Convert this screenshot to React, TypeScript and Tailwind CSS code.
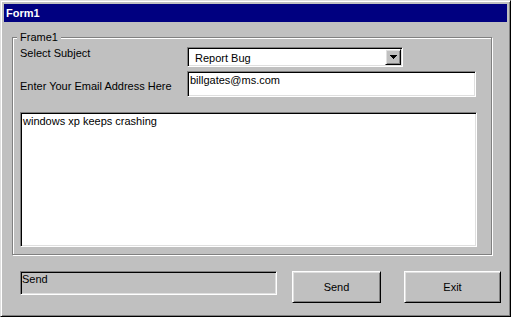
const sunken =
  "border border-t-[#808080] border-l-[#808080] border-b-white border-r-white shadow-[inset_1px_1px_0_#000,inset_-1px_-1px_0_#dfdfdf]";
const raised =
  "border border-t-white border-l-white border-b-black border-r-black shadow-[inset_1px_1px_0_#dfdfdf,inset_-1px_-1px_0_#808080]";

function DownArrow() {
  return (
    <svg width="7" height="4" viewBox="0 0 7 4" shapeRendering="crispEdges">
      <rect x="0" y="0" width="7" height="1" fill="#000" />
      <rect x="1" y="1" width="5" height="1" fill="#000" />
      <rect x="2" y="2" width="3" height="1" fill="#000" />
      <rect x="3" y="3" width="1" height="1" fill="#000" />
    </svg>
  );
}

function Button({ label, width }: { label: string; width: string }) {
  return (
    <button
      className={`${raised} ${width} h-[32px] bg-[#c0c0c0] flex items-center justify-center text-black`}
    >
      {label}
    </button>
  );
}

export default function App() {
  return (
    <div
      className={`w-[511px] h-[317px] bg-[#c0c0c0] flex flex-col p-[3px] border border-t-[#dfdfdf] border-l-[#dfdfdf] border-b-black border-r-black shadow-[inset_1px_1px_0_#fff,inset_-1px_-1px_0_#808080] font-['Liberation_Sans',Arial,sans-serif] text-[11px] leading-[13px] text-black overflow-hidden`}
    >
      {/* title bar */}
      <div className="h-[18px] shrink-0 bg-[#000080] text-white font-bold leading-[18px] pl-[2px]">
        Form1
      </div>

      {/* Frame1 */}
      <div className="relative ml-[8px] mt-[15px] w-[480px] h-[218px] shrink-0 border border-[#808080] shadow-[inset_1px_1px_0_#fff,1px_1px_0_#fff]">
        <span className="absolute left-[4px] top-[-7px] bg-[#c0c0c0] px-[3px]">Frame1</span>

        <div className="flex mt-[9px] pl-[7px]">
          <div className="w-[167px]">Select Subject</div>
          <div className={`${sunken} w-[216px] h-[20px] bg-white flex`}>
            <div className="flex-1 pl-[7px] pt-[4px]">Report Bug</div>
            <div className={`${raised} w-[16px] h-[16px] m-[1px] bg-[#c0c0c0] flex items-center justify-center`}>
              <DownArrow />
            </div>
          </div>
        </div>

        <div className="flex mt-[4px] pl-[7px]">
          <div className="w-[167px] mt-[9px]">Enter Your Email Address Here</div>
          <div className={`${sunken} w-[289px] h-[26px] bg-white pl-[2px] pt-[2px]`}>
            billgates@ms.com
          </div>
        </div>

        <div className={`${sunken} ml-[7px] mt-[15px] w-[457px] h-[135px] bg-white pl-[2px] pt-[2px]`}>
          windows xp keeps crashing
        </div>
      </div>

      {/* bottom row */}
      <div className="flex items-start mt-[16px] ml-[16px]">
        <div className={`${sunken} w-[257px] h-[24px] pl-[1px] pt-[1px]`}>Send</div>
        <div className="ml-[15px]">
          <Button label="Send" width="w-[89px]" />
        </div>
        <div className="ml-[23px]">
          <Button label="Exit" width="w-[97px]" />
        </div>
      </div>
    </div>
  );
}
